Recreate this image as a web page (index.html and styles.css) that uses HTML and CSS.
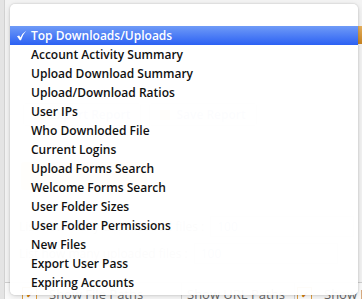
FILE: index.html
```html
<!DOCTYPE html>
<html lang="en">
<head>
    <meta charset="UTF-8">
    <title>Report Menu</title>
    <link rel="stylesheet" href="styles.css">
</head>
<body>

<div class="page">
    <div class="topBar"><span class="topTab"></span></div>

    <div class="buttonRow">
        <span class="pageButton"><span class="btnIcon"></span>Export Report</span>
        <span class="pageButton"><span class="btnIcon"></span>Save Report</span>
    </div>

    <div class="notice"></div>

    <div class="fieldRow wide">
        <span class="fieldLabel">List how many downloaded files :</span>
        <span class="fieldBox">100</span>
    </div>
    <div class="fieldRow">
        <span class="fieldLabel">List how many uploaded files :</span>
        <span class="fieldBox">100</span>
    </div>

    <div class="checkRow">
        <span class="checkItem first"><span class="checkBox">&#x2714;</span>Show File Paths</span>
        <span class="checkItem second">Show URL Paths</span>
        <span class="checkItem third"><span class="checkBox">&#x2714;</span>Show D</span>
    </div>
</div>

<!-- popup menu lies over the page -->
<div class="popupMenu">
    <div class="menuItem empty"></div>
    <div class="menuItem selected">
        <svg class="tick" width="11" height="11" viewBox="0 0 11 11">
            <path d="M1 6.2 L3.2 5.4 L4.4 7.6 Q6.6 3 10.2 0.8 Q7.2 4 5 10.2 L3.8 10.2 Z" fill="#fff"/>
        </svg>Top Downloads/Uploads</div>
    <div class="menuItem">Account Activity Summary</div>
    <div class="menuItem">Upload Download Summary</div>
    <div class="menuItem">Upload/Download Ratios</div>
    <div class="menuItem">User IPs</div>
    <div class="menuItem">Who Downloded File</div>
    <div class="menuItem">Current Logins</div>
    <div class="menuItem">Upload Forms Search</div>
    <div class="menuItem">Welcome Forms Search</div>
    <div class="menuItem">User Folder Sizes</div>
    <div class="menuItem">User Folder Permissions</div>
    <div class="menuItem">New Files</div>
    <div class="menuItem">Export User Pass</div>
    <div class="menuItem">Expiring Accounts</div>
</div>

</body>
</html>
```

FILE: styles.css
```css
html, body {
    margin: 0;
    padding: 0;
}

body {
    width: 362px;
    height: 299px;
    overflow: hidden;
    position: relative;
    background-color: #e4e4e4;
    font-family: 'Open Sans', sans-serif;
}

.page {
    margin-left: 4px;
    height: 299px;
    background-color: #f3f3f3;
    border-left: 1px solid #d2d2d2;
    display: flex;
    flex-direction: column;
    font-size: 12px;
    color: #555;
}

.topBar {
    height: 26px;
    margin-top: 26px;
    display: flex;
    justify-content: flex-end;
}

.topTab {
    width: 12px;
    height: 18px;
    background: linear-gradient(#e8b260, #c98420);
}

.buttonRow {
    margin-top: 51px;
    margin-left: 18px;
    display: flex;
    gap: 8px;
}

.pageButton {
    display: flex;
    align-items: center;
    gap: 6px;
    padding: 2px 10px;
    border: 1px solid #dcdcdc;
    border-radius: 3px;
    background-color: #fff;
    color: #8fa8d0;
    font-weight: 600;
}

.btnIcon {
    width: 10px;
    height: 10px;
    background-color: #eeb766;
}

.notice {
    margin-top: 36px;
    margin-left: 16px;
    width: 126px;
    height: 28px;
    background-color: #f6d8a8;
    border-radius: 3px;
}

.fieldRow {
    margin-top: 26px;
    margin-left: 14px;
    display: flex;
    align-items: center;
    gap: 6px;
}

.fieldRow + .fieldRow {
    margin-top: 6px;
}

.fieldLabel {
    color: #999;
}

.fieldBox {
    width: 130px;
    padding: 1px 6px;
    border: 1px solid #dcdcdc;
    background-color: #fff;
    color: #8fa8d0;
}

.checkRow {
    margin-top: auto;
    margin-bottom: -6px;
    height: 22px;
    display: flex;
    align-items: center;
    border-top: 1px solid #cfcfcf;
    background-color: #fafafa;
}

.checkItem {
    box-sizing: border-box;
    height: 100%;
    display: flex;
    align-items: center;
    gap: 12px;
    padding-left: 17px;
    border-right: 1px solid #cfcfcf;
    color: #666;
    font-size: 13px;
    white-space: nowrap;
    overflow: hidden;
}

.checkItem.first {
    width: 177px;
}

.checkItem.second {
    width: 113px;
    padding-left: 5px;
}

.checkItem.third {
    flex: 1;
    padding-left: 2px;
    border-right: none;
}

.checkBox {
    flex-shrink: 0;
    width: 13px;
    height: 13px;
    border: 1px solid #e2a040;
    color: #d9840f;
    font-size: 9px;
    text-align: center;
    line-height: 13px;
    background-color: #fff;
}

/* the open popup */
.popupMenu {
    position: absolute;
    left: 10px;
    top: 4px;
    width: 348px;
    padding: 3px 0;
    background-color: rgba(255, 255, 255, 0.97);
    border-radius: 5px;
    box-shadow: 0 0 2px rgba(0, 0, 0, 0.22), 0 2px 6px rgba(0, 0, 0, 0.12);
}

.menuItem {
    height: 19px;
    line-height: 19px;
    padding-left: 21px;
    font-size: 12px;
    font-weight: 600;
    color: #111;
    position: relative;
}

.menuItem.selected {
    background: linear-gradient(#6f9bf7, #2c61f3);
    color: #fff;
}

.tick {
    position: absolute;
    left: 6px;
    top: 4px;
}
```
